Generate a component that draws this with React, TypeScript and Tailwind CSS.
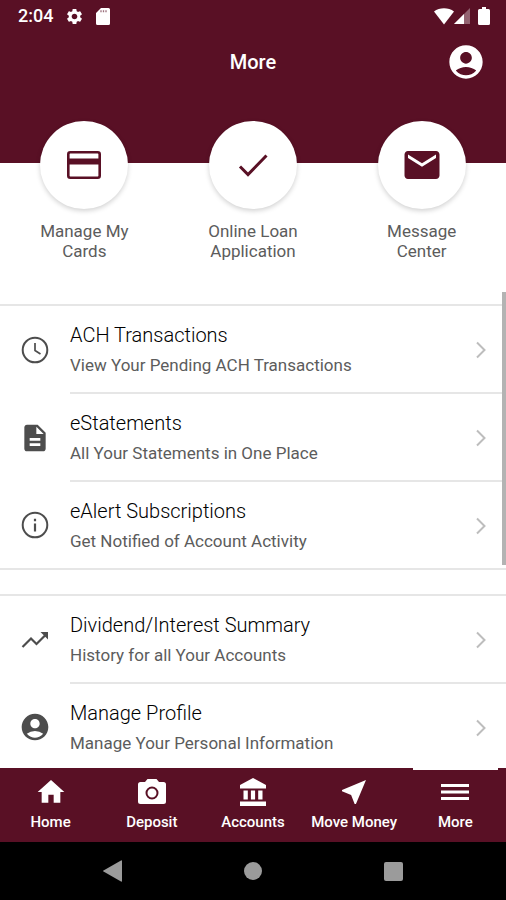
import React from 'react';
import {
  MdAccountCircle,
  MdDescription,
  MdHome,
  MdMail,
  MdNearMe,
  MdSettings,
} from 'react-icons/md';

const SdCard = () => (
  <svg viewBox="0 0 14 17" className="w-[14px] h-[17px]" fill="currentColor">
    <path d="M5 0h7.5A1.5 1.5 0 0 1 14 1.5v14a1.5 1.5 0 0 1-1.500 1.500h-11A1.500 1.500 0 0 1 0 15.500V5z" />
    <path d="M5 2.200v2M7.500 2.200v2M10 2.200v2" stroke="#591025" strokeWidth="1.300" opacity="0.6" />
  </svg>
);

const Wifi = () => (
  <svg viewBox="0 0 20 17" className="w-5 h-[17px]" fill="currentColor">
    <path d="M0 3.500C5.500-.8 14.500-.8 20 3.500L10 16.500z" />
  </svg>
);

const Signal = () => (
  <svg viewBox="0 0 16 16" className="w-4 h-4" fill="currentColor">
    <path d="M16 0v16H0z" opacity="0.35" />
    <path d="M10 6v10H0z" />
  </svg>
);

const Battery = () => (
  <svg viewBox="0 0 12 18" className="w-3 h-[18px]" fill="currentColor">
    <path d="M4 0h4v2h2.500A1.500 1.500 0 0 1 12 3.500v13a1.500 1.500 0 0 1-1.500 1.500h-9A1.500 1.500 0 0 1 0 16.500v-13A1.500 1.500 0 0 1 1.500 2H4z" />
  </svg>
);

const CardIcon = () => (
  <svg viewBox="0 0 34 28" className="w-[34px] h-7" fill="none" stroke="currentColor" strokeWidth="2.600">
    <rect x="1.300" y="1.300" width="31.400" height="25.400" rx="2" />
    <path d="M1 10.500h32" strokeWidth="6" />
  </svg>
);

const CheckIcon = () => (
  <svg viewBox="0 0 30 24" className="w-[30px] h-6" fill="none" stroke="currentColor" strokeWidth="3">
    <path d="M2 13.500l8 8L28.500 2.500" />
  </svg>
);

const ClockIcon = () => (
  <svg viewBox="0 0 28 28" className="w-7 h-7" fill="none" stroke="currentColor" strokeWidth="2">
    <circle cx="14" cy="14" r="12.300" />
    <path d="M14 7v7.500l5.500 3.500" strokeWidth="1.700" />
  </svg>
);

const InfoIcon = () => (
  <svg viewBox="0 0 28 28" className="w-7 h-7" fill="none" stroke="currentColor" strokeWidth="2">
    <circle cx="14" cy="14" r="12.300" />
    <path d="M14 12.500v8M14 7.700v2.500" strokeWidth="2.200" />
  </svg>
);

const TrendIcon = () => (
  <svg viewBox="0 0 28 18" className="w-7 h-[18px]" fill="none" stroke="currentColor" strokeWidth="2.200">
    <path d="M1.500 16L10 7.500l5.500 5.500L25 3.500" />
    <path d="M19.500 1H27v7.500z" fill="currentColor" stroke="none" />
  </svg>
);

const CameraIcon = () => (
  <svg viewBox="0 0 28 26" className="w-7 h-[26px]" fill="currentColor">
    <path d="M9.500 0h9L21 3h4.500A2.500 2.500 0 0 1 28 5.500v17a2.500 2.500 0 0 1-2.500 2.500h-23A2.500 2.500 0 0 1 0 22.500v-17A2.500 2.500 0 0 1 2.500 3H7z" />
    <circle cx="14" cy="14" r="5.500" fill="none" stroke="#591025" strokeWidth="2" />
  </svg>
);

const BankIcon = () => (
  <svg viewBox="0 0 26 28" className="w-[26px] h-7" fill="currentColor">
    <path d="M13 0l13 7v3.500H0V7zM3.500 12.500h4.300v9H3.500zM10.900 12.500h4.200v9h-4.200zM18.200 12.500h4.300v9h-4.300zM0 23.500h26V28H0z" />
  </svg>
);

const MenuIcon = () => (
  <svg viewBox="0 0 28 18" className="w-7 h-[18px]" stroke="currentColor" strokeWidth="3">
    <path d="M0 2.500h28M0 9h28M0 15.500h28" />
  </svg>
);

const Chevron = () => (
  <svg viewBox="0 0 10 18" className="w-[10px] h-[18px] shrink-0 text-[#bdbdbd]" fill="none" stroke="currentColor" strokeWidth="2">
    <path d="M1 1.500L8.500 9 1 16.500" />
  </svg>
);

const shortcuts = [
  { label: 'Manage My Cards', icon: <CardIcon /> },
  { label: 'Online Loan Application', icon: <CheckIcon /> },
  { label: 'Message Center', icon: <MdMail size={42} /> },
];

const groups = [
  [
    { title: 'ACH Transactions', text: 'View Your Pending ACH Transactions', icon: <ClockIcon /> },
    { title: 'eStatements', text: 'All Your Statements in One Place', icon: <MdDescription size={32} /> },
    { title: 'eAlert Subscriptions', text: 'Get Notified of Account Activity', icon: <InfoIcon /> },
  ],
  [
    { title: 'Dividend/Interest Summary', text: 'History for all Your Accounts', icon: <TrendIcon /> },
    { title: 'Manage Profile', text: 'Manage Your Personal Information', icon: <MdAccountCircle size={32} /> },
  ],
];

const tabs = [
  { label: 'Home', icon: <MdHome size={32} /> },
  { label: 'Deposit', icon: <CameraIcon /> },
  { label: 'Accounts', icon: <BankIcon /> },
  { label: 'Move Money', icon: <MdNearMe size={32} /> },
  { label: 'More', icon: <MenuIcon />, active: true },
];

const StatusBar = () => (
  <div className="flex items-center justify-between h-8 pl-[18px] pr-4">
    <div className="flex items-center gap-3">
      <span className="text-lg font-medium">2:04</span>
      <MdSettings size={19} />
      <SdCard />
    </div>
    <div className="flex items-center">
      <Wifi />
      <Signal />
      <span className="ml-2">
        <Battery />
      </span>
    </div>
  </div>
);

const Row = ({ title, text, icon }: any) => (
  <li className="group">
    <button type="button" className="flex w-full items-center text-left">
      <span className="flex w-[70px] shrink-0 justify-center text-[#4d4d4d]">{icon}</span>
      <span className="flex flex-1 items-center justify-between pt-[15px] pb-[13px] pr-5 border-b-2 border-[#e6e6e6] group-last:border-b-0">
        <span className="flex flex-col gap-[2px]">
          <span className="text-xl leading-7 font-light text-black">{title}</span>
          <span className="text-[17px] leading-7 text-[#5c5c5c]">{text}</span>
        </span>
        <Chevron />
      </span>
    </button>
  </li>
);

const App = () => (
  <div className="flex flex-col h-dvh overflow-hidden bg-white font-[Roboto,sans-serif]">
    <header className="shrink-0 h-[163px] bg-[#591025] text-white">
      <StatusBar />
      <div className="grid grid-cols-3 items-center h-[60px] px-5">
        <h1 className="col-start-2 text-center text-xl font-medium">More</h1>
        <button type="button" aria-label="Profile" className="justify-self-end">
          <MdAccountCircle size={40} />
        </button>
      </div>
    </header>

    <nav className="grid grid-cols-3 shrink-0 -mt-[42px]">
      {shortcuts.map(item => (
        <button key={item.label} type="button" className="flex flex-col items-center gap-3">
          <span className="flex items-center justify-center w-[88px] h-[88px] rounded-full bg-white text-[#591025] shadow-[0_2px_5px_rgba(0,0,0,0.18)]">
            {item.icon}
          </span>
          <span className="w-[100px] text-[17px] leading-5 text-[#5c5c5c]">{item.label}</span>
        </button>
      ))}
    </nav>

    <main className="relative flex-1 min-h-0 mt-[31px] overflow-hidden">
      <div className="flex flex-col gap-6 pt-3">
        {groups.map((rows, index) => (
          <ul key={index} className="border-y-2 border-[#e6e6e6]">
            {rows.map(row => (
              <Row key={row.title} {...row} />
            ))}
          </ul>
        ))}
      </div>
      {/* Scroll indicator */}
      <div className="absolute top-0 right-0 w-1 h-[273px] bg-[#b3b3b3]" />
    </main>

    <nav className="grid grid-cols-5 shrink-0 h-[74px] bg-[#591025] text-white">
      {tabs.map(tab => (
        <button key={tab.label} type="button" className="relative flex flex-col items-center pt-2">
          {tab.active && <span className="absolute top-0 inset-x-2 h-[2px] bg-white" />}
          <span className="flex items-center justify-center h-8">{tab.icon}</span>
          <span className="text-[15px] leading-7 font-medium whitespace-nowrap">{tab.label}</span>
        </button>
      ))}
    </nav>

    <div className="grid grid-cols-3 shrink-0 items-center justify-items-center h-[58px] px-[42px] bg-black text-[#9b9b9b]">
      <button type="button" aria-label="Back">
        <svg viewBox="0 0 19 22" className="w-[19px] h-[22px]" fill="currentColor">
          <path d="M18 .5a.7.7 0 0 1 1 .6v19.800a.7.7 0 0 1-1 .6L.500 11.600a.7.7 0 0 1 0-1.200z" />
        </svg>
      </button>
      <button type="button" aria-label="Home" className="w-[18px] h-[18px] rounded-full bg-current" />
      <button type="button" aria-label="Recent apps" className="w-[19px] h-[19px] rounded-xs bg-current" />
    </div>
  </div>
);

export default App;
